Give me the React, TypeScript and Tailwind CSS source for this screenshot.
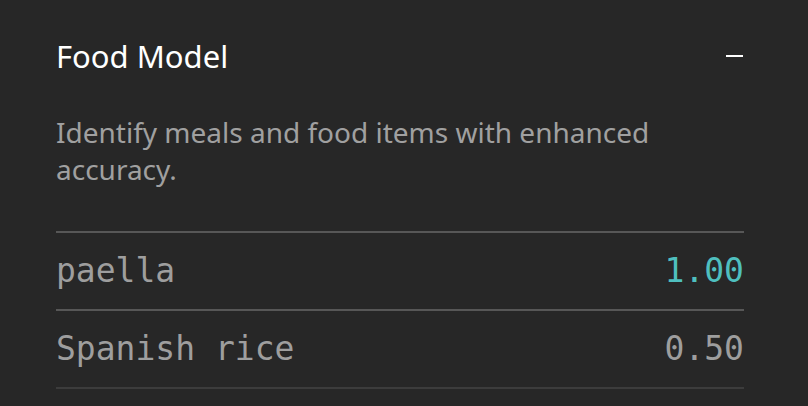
import React from 'react';

const rows = [
  { label: 'paella', score: '1.00', top: true, line: 'border-[#575757]' },
  { label: 'Spanish rice', score: '0.50', top: false, line: 'border-[#3c3c3c]' },
];

export default function App() {
  return (
    <div className="w-[808px] h-[406px] bg-[#272727] overflow-hidden font-['Noto_Sans',sans-serif]">
      <div className="ml-[56px] w-[688px] pt-[34px]">
        {/* Header */}
        <div className="flex items-center justify-between h-[44px]">
          <h2 className="text-[31px] leading-none text-white">Food Model</h2>
          <span className="block w-[17px] h-[2px] bg-white mr-px" />
        </div>

        <p className="mt-[36px] text-[28px] leading-[37px] text-[#a0a0a0] w-[640px]">
          Identify meals and food items with enhanced accuracy.
        </p>

        {/* Results */}
        <div className="mt-[43px] border-t-2 border-[#575757]">
          {rows.map((r) => (
            <div
              key={r.label}
              className={`flex items-center justify-between h-[78px] border-b-2 ${r.line} font-['DejaVu_Sans_Mono',monospace] text-[33px]`}
            >
              <span className="text-[#9e9e9e]">{r.label}</span>
              <span className={r.top ? 'text-[#4fbfbf]' : 'text-[#9e9e9e]'}>{r.score}</span>
            </div>
          ))}
        </div>
      </div>
    </div>
  );
}
